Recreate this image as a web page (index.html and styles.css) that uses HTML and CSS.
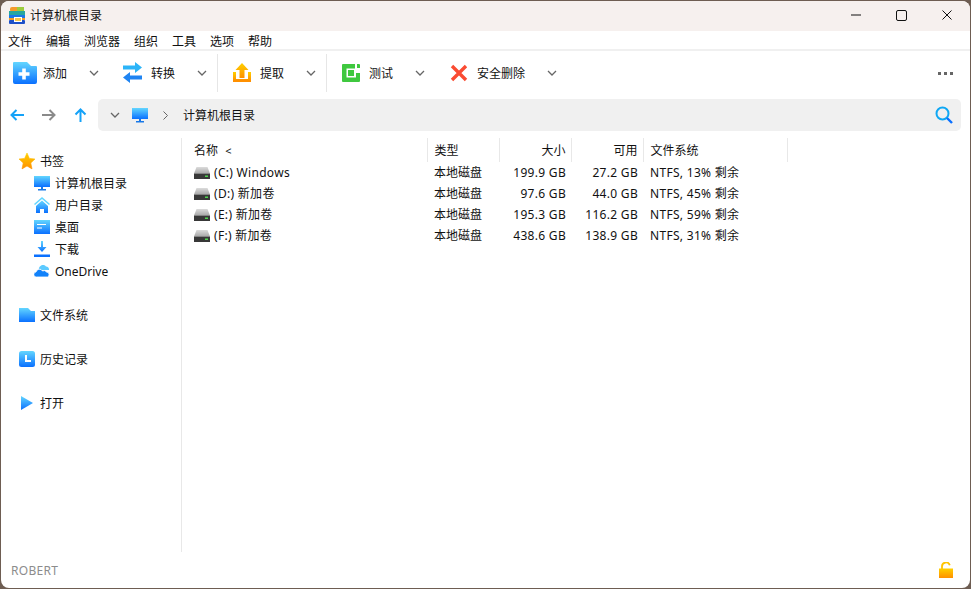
FILE: index.html
```html
<!DOCTYPE html>
<html>
<head>
    <title>计算机根目录</title>
    <link rel="stylesheet" href="styles.css">
</head>
<body>
    <svg class="defs" width="0" height="0">
        <defs>
            <linearGradient id="blue" x1="0" y1="0" x2="0" y2="1">
                <stop offset="0" stop-color="#63d6ff"/>
                <stop offset="1" stop-color="#0a70ff"/>
            </linearGradient>
            <linearGradient id="orange" x1="0" y1="0" x2="0" y2="1">
                <stop offset="0" stop-color="#ffd000"/>
                <stop offset="1" stop-color="#ff9000"/>
            </linearGradient>
            <linearGradient id="disk" x1="0" y1="0" x2="0" y2="1">
                <stop offset="0" stop-color="#dcdcdc"/>
                <stop offset="1" stop-color="#a8a8a8"/>
            </linearGradient>
            <symbol id="drive" viewBox="0 0 16 12">
                <path d="M2.500 0h11l2.500 6.500H0z" fill="url(#disk)"/>
                <rect y="6.500" width="16" height="5.500" fill="#383838"/>
                <rect x="11" y="8.500" width="3" height="1.500" fill="#4fd44f"/>
            </symbol>
        </defs>
    </svg>

    <div class="window">
        <div class="titlebar">
            <svg class="app-icon" width="16" height="17" viewBox="0 0 16 17">
                <rect x="1" y="0" width="14" height="5" rx="2" fill="#f59a2c"/>
                <rect x="8" y="0" width="7" height="5" fill="#9ccc3c"/>
                <rect x="0" y="4" width="16" height="4" fill="#26a6a0"/>
                <rect x="0" y="8" width="16" height="3" fill="#1878e8"/>
                <rect x="0" y="11" width="16" height="2" fill="#f29a24"/>
                <rect x="0" y="13" width="16" height="4" rx="1" fill="#1d4fc8"/>
                <rect x="5.500" y="10.500" width="7" height="4" fill="#f7c64a" stroke="#fff" stroke-width="1"/>
            </svg>
            <span class="title">计算机根目录</span>
            <div class="win-controls">
                <svg width="10" height="10" viewBox="0 0 10 10"><path d="M0 5h10" stroke="#111" fill="none"/></svg>
                <svg width="11" height="11" viewBox="0 0 11 11"><rect x=".5" y=".5" width="10" height="10" rx="1.500" stroke="#111" fill="none"/></svg>
                <svg width="10" height="10" viewBox="0 0 10 10"><path d="M.5.500l9 9M9.500.500l-9 9" stroke="#111" fill="none"/></svg>
            </div>
        </div>

        <div class="menubar">
            <span>文件</span><span>编辑</span><span>浏览器</span><span>组织</span><span>工具</span><span>选项</span><span>帮助</span>
        </div>

        <div class="toolbar">
            <div class="tool">
                <svg class="tool-icon" viewBox="0 0 24 24">
                    <path d="M0 2a1 1 0 0 1 1-1h13l4 4h5a1 1 0 0 1 1 1v15a2 2 0 0 1-2 2H2a2 2 0 0 1-2-2z" fill="url(#blue)"/>
                    <path d="M9.200 7.500h3.600v3.700h3.700v3.600h-3.700v3.700H9.200v-3.700H5.500v-3.600h3.700z" fill="#fff"/>
                </svg>
                <span>添加</span>
                <svg class="caret" viewBox="0 0 10 6"><path d="M1 1l4 4 4-4"/></svg>
            </div>
            <div class="tool">
                <svg class="tool-icon" viewBox="0 0 24 24">
                    <path d="M14 1l7 5.500-7 5.500V8.500H2v-4h12z" fill="#2cb4f8"/>
                    <path d="M9 11l-7 5.500L9 22v-3.500h12v-4H9z" fill="#1f84f2"/>
                </svg>
                <span>转换</span>
                <svg class="caret" viewBox="0 0 10 6"><path d="M1 1l4 4 4-4"/></svg>
            </div>
            <div class="tool-sep"></div>
            <div class="tool">
                <svg class="tool-icon" viewBox="0 0 24 24">
                    <path d="M12 2l6.500 7H14.500v8h-5V9H5.500z" fill="url(#orange)"/>
                    <path d="M4.500 11v8.500h15V11" stroke="url(#orange)" stroke-width="3" fill="none"/>
                </svg>
                <span>提取</span>
                <svg class="caret" viewBox="0 0 10 6"><path d="M1 1l4 4 4-4"/></svg>
            </div>
            <div class="tool-sep"></div>
            <div class="tool">
                <svg class="tool-icon" viewBox="0 0 24 24">
                    <path d="M4 3h12v4.500H7.500v9H17V12h4v8a1 1 0 0 1-1 1H4a1 1 0 0 1-1-1V4a1 1 0 0 1 1-1z" fill="#3fc83f"/>
                    <path d="M18 3h2a1 1 0 0 1 1 1v3h-3z" fill="#3fc83f"/>
                    <rect x="9" y="9" width="6" height="6" fill="#3fc83f"/>
                </svg>
                <span>测试</span>
                <svg class="caret" viewBox="0 0 10 6"><path d="M1 1l4 4 4-4"/></svg>
            </div>
            <div class="tool">
                <svg class="tool-icon" viewBox="0 0 24 24">
                    <path d="M5 5l14 14M19 5L5 19" stroke="#fa4b32" stroke-width="3.400" fill="none"/>
                </svg>
                <span>安全删除</span>
                <svg class="caret" viewBox="0 0 10 6"><path d="M1 1l4 4 4-4"/></svg>
            </div>
            <div class="more"><i></i><i></i><i></i></div>
        </div>

        <div class="navbar">
            <div class="nav-buttons">
                <svg width="14" height="12" viewBox="0 0 14 12"><path d="M14 6H2M6.500 1L1.500 6l5 5" stroke="#14a2f8" stroke-width="2" fill="none"/></svg>
                <svg width="14" height="12" viewBox="0 0 14 12"><path d="M0 6h12M7.500 1l5 5-5 5" stroke="#8a8a8a" stroke-width="2" fill="none"/></svg>
                <svg width="13" height="14" viewBox="0 0 13 14"><path d="M6.500 14V2M1.500 6.500l5-5 5 5" stroke="#14a2f8" stroke-width="2" fill="none"/></svg>
            </div>
            <div class="address">
                <svg class="caret" viewBox="0 0 10 6"><path d="M1 1l4 4 4-4"/></svg>
                <svg class="addr-pc" width="16" height="15" viewBox="0 0 16 15">
                    <rect width="16" height="11" fill="url(#blue)"/>
                    <path d="M7 11h2v2h3v1.500H4V13h3z" fill="#1878e8"/>
                </svg>
                <svg class="addr-arrow" width="5" height="9" viewBox="0 0 5 9"><path d="M.5.500l4 4-4 4" stroke="#666" fill="none"/></svg>
                <span class="addr-text">计算机根目录</span>
                <svg class="search" width="18" height="18" viewBox="0 0 18 18">
                    <circle cx="7.500" cy="7.500" r="6" stroke="#10a8f4" stroke-width="2" fill="none"/>
                    <path d="M12 12l5 5" stroke="#0a70ff" stroke-width="2.400"/>
                </svg>
            </div>
        </div>

        <div class="content">
            <div class="sidebar">
                <div class="side-row">
                    <svg width="16" height="17" viewBox="0 0 16 17"><path d="M8 0l2.400 5.400 5.600.6-4.200 3.900 1.200 6L8 13l-5 2.900 1.200-6L0 6l5.600-.6z" fill="url(#orange)" stroke="url(#orange)" stroke-width=".6" stroke-linejoin="round"/></svg>
                    <span>书签</span>
                </div>
                <div class="side-row sub">
                    <svg width="16" height="16" viewBox="0 0 16 16"><rect width="16" height="11" y="1" fill="url(#blue)"/><path d="M7 12h2v2h3v1.500H4V14h3z" fill="#1878e8"/></svg>
                    <span>计算机根目录</span>
                </div>
                <div class="side-row sub">
                    <svg width="16" height="16" viewBox="0 0 16 16"><path d="M8 0l8 7-1 1-7-6-7 6-1-1z" fill="#63d6ff"/><path d="M8 3.500l6 5.500v7h-4v-4H6v4H2V9z" fill="url(#blue)"/></svg>
                    <span>用户目录</span>
                </div>
                <div class="side-row sub">
                    <svg width="16" height="16" viewBox="0 0 16 16"><rect width="16" height="14" y="1" fill="url(#blue)"/><path d="M3 5.500h9M3 9h5" stroke="#fff"/></svg>
                    <span>桌面</span>
                </div>
                <div class="side-row sub">
                    <svg width="16" height="16" viewBox="0 0 16 16"><path d="M7 0h2v6h3.500L8 11 3.500 6H7z" fill="url(#blue)"/><rect y="13.500" width="16" height="2.500" fill="#0a70ff"/></svg>
                    <span>下载</span>
                </div>
                <div class="side-row sub">
                    <svg width="16" height="12" viewBox="0 0 16 12">
                        <path d="M5 5a4 4 0 0 1 7-3.500A3 3 0 0 1 15 5z" fill="#5ccaff"/>
                        <path d="M2.500 12a2.500 2.500 0 0 1-.5-5 3.500 3.500 0 0 1 6.500-1 3 3 0 0 1 4 1 2.600 2.600 0 0 1 1 5z" fill="#1282fa" stroke="#fff" stroke-width=".8"/>
                    </svg>
                    <span>OneDrive</span>
                </div>
                <div class="side-row group">
                    <svg width="16" height="14" viewBox="0 0 16 14"><path d="M0 0h9l3 3h4v11H0z" fill="url(#blue)"/></svg>
                    <span>文件系统</span>
                </div>
                <div class="side-row group">
                    <svg width="16" height="16" viewBox="0 0 16 16"><rect width="16" height="16" rx="2.500" fill="url(#blue)"/><path d="M7 4v6h5" stroke="#fff" stroke-width="2" fill="none"/></svg>
                    <span>历史记录</span>
                </div>
                <div class="side-row group">
                    <svg width="16" height="16" viewBox="0 0 16 16"><path d="M2 1l12 7-12 7z" fill="url(#blue)"/></svg>
                    <span>打开</span>
                </div>
            </div>

            <table class="files">
                <colgroup>
                    <col class="col-name"><col class="col-type"><col class="col-size"><col class="col-size"><col class="col-fs">
                </colgroup>
                <thead>
                    <tr>
                        <th class="name">名称 <small>&lt;</small></th>
                        <th>类型</th>
                        <th class="num">大小</th>
                        <th class="num">可用</th>
                        <th>文件系统</th>
                    </tr>
                </thead>
                <tbody>
                    <tr>
                        <td class="name lat"><svg class="drive"><use href="#drive"/></svg>(C:) Windows</td>
                        <td>本地磁盘</td><td class="num lat">199.9 GB</td><td class="num lat">27.2 GB</td><td class="lat">NTFS, 13% 剩余</td>
                    </tr>
                    <tr>
                        <td class="name lat"><svg class="drive"><use href="#drive"/></svg>(D:) 新加卷</td>
                        <td>本地磁盘</td><td class="num lat">97.6 GB</td><td class="num lat">44.0 GB</td><td class="lat">NTFS, 45% 剩余</td>
                    </tr>
                    <tr>
                        <td class="name lat"><svg class="drive"><use href="#drive"/></svg>(E:) 新加卷</td>
                        <td>本地磁盘</td><td class="num lat">195.3 GB</td><td class="num lat">116.2 GB</td><td class="lat">NTFS, 59% 剩余</td>
                    </tr>
                    <tr>
                        <td class="name lat"><svg class="drive"><use href="#drive"/></svg>(F:) 新加卷</td>
                        <td>本地磁盘</td><td class="num lat">438.6 GB</td><td class="num lat">138.9 GB</td><td class="lat">NTFS, 31% 剩余</td>
                    </tr>
                </tbody>
            </table>
        </div>

        <div class="statusbar">
            <span class="user">ROBERT</span>
            <svg width="14" height="16" viewBox="0 0 14 16">
                <path d="M3 7V4.500a4 4 0 0 1 7.800-1.300" stroke="#ffc400" stroke-width="1.800" fill="none"/>
                <rect y="6.500" width="14" height="9.500" fill="url(#orange)"/>
            </svg>
        </div>
    </div>
</body>
</html>
```

FILE: styles.css
```css
html, body {
    height: 100%;
}
body {
    margin: 0;
    padding: 1px;
    box-sizing: border-box;
    background: #6e5d52;
    font-family: "Noto Sans", "Noto Sans CJK SC", sans-serif;
    font-size: 12px;
    color: #111;
    overflow: hidden;
}
.defs {
    position: absolute;
}
.window {
    height: 100%;
    display: flex;
    flex-direction: column;
    background: #fff;
    border-radius: 8px;
    overflow: hidden;
}
.titlebar {
    height: 30px;
    flex: none;
    box-sizing: border-box;
    display: flex;
    align-items: center;
    padding: 0 0 2px 8px;
    background: #f6f0ee;
}
.app-icon {
    margin-right: 5px;
}
.win-controls {
    margin-left: auto;
    margin-right: 18px;
    display: flex;
    align-items: center;
    gap: 35px;
}
.menubar {
    height: 18px;
    flex: none;
    box-sizing: border-box;
    display: flex;
    align-items: center;
    gap: 14px;
    padding: 2px 0 0 7px;
}
.toolbar {
    height: 49px;
    flex: none;
    box-sizing: border-box;
    display: flex;
    align-items: center;
    border-top: 2px solid #f0f0f0;
    padding-bottom: 3px;
}
.tool {
    display: flex;
    align-items: center;
    padding: 0 10px 0 12px;
}
.tool-icon {
    width: 24px;
    height: 24px;
    margin-right: 6px;
}
.caret {
    width: 10px;
    height: 6px;
    margin-left: 22px;
    fill: none;
    stroke: #666;
    stroke-width: 1.300;
}
.tool-sep {
    width: 1px;
    height: 38px;
    background: #e6e6e6;
}
.more {
    margin-left: auto;
    margin-right: 17px;
    display: flex;
    gap: 3px;
}
.more i {
    width: 3px;
    height: 3px;
    background: #666;
}
.navbar {
    height: 33px;
    flex: none;
    display: flex;
    align-items: flex-end;
    margin-right: 9px;
}
.nav-buttons {
    width: 97px;
    height: 32px;
    flex: none;
    display: flex;
    align-items: center;
    gap: 18px;
    padding-left: 9px;
    box-sizing: border-box;
}
.address {
    flex: 1;
    height: 32px;
    display: flex;
    align-items: center;
    background: #f0f0f0;
    border-radius: 5px;
}
.address .caret {
    margin-left: 12px;
}
.addr-pc {
    margin-left: 12px;
}
.addr-arrow {
    margin-left: 15px;
}
.addr-text {
    margin-left: 15px;
}
.search {
    margin-left: auto;
    margin-right: 8px;
}
.content {
    flex: 1;
    display: flex;
    padding-top: 7px;
}
.sidebar {
    width: 181px;
    flex: none;
    box-sizing: border-box;
    padding-top: 12px;
    border-right: 1px solid #e8e8e8;
}
.side-row {
    height: 22px;
    display: flex;
    align-items: center;
    gap: 5px;
    padding-left: 18px;
}
.side-row.sub {
    padding-left: 33px;
}
.side-row.group {
    margin-top: 22px;
}
.files {
    border-collapse: collapse;
    table-layout: fixed;
    width: 605px;
    align-self: flex-start;
}
.col-name {
    width: 245px;
}
.col-type, .col-size {
    width: 72px;
}
.col-fs {
    width: 144px;
}
.files th {
    height: 24px;
    padding: 0 5px 0 7px;
    font-weight: normal;
    text-align: left;
    border-right: 1px solid #e8e8e8;
}
.files th small {
    font-size: 11px;
    margin-left: 4px;
}
.files td {
    height: 21px;
    box-sizing: border-box;
    padding: 0 5px 1px 7px;
    white-space: nowrap;
}
.files .lat {
    letter-spacing: .3px;
}
.files .name {
    padding-left: 12px;
}
.files .num {
    text-align: right;
}
.drive {
    width: 16px;
    height: 12px;
    margin-right: 4px;
    vertical-align: -2px;
}
.statusbar {
    height: 36px;
    flex: none;
    display: flex;
    align-items: center;
    justify-content: space-between;
    padding: 0 17px 0 10px;
}
.user {
    color: #8c8c8c;
    letter-spacing: .3px;
}
```
